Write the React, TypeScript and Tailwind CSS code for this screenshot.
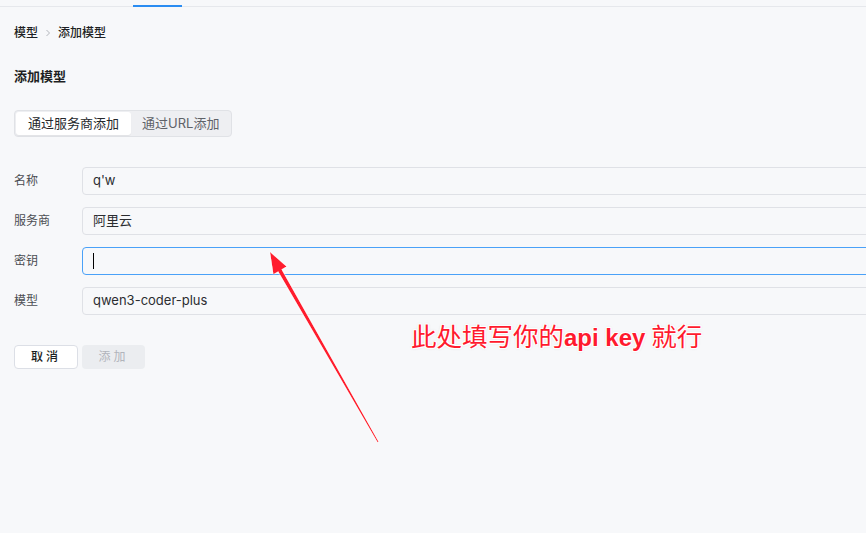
import React from "react";

const font = { fontFamily: '"Inter","Noto Sans CJK SC",sans-serif' };

function Row({ label, value, focused }: { label: string; value?: string; focused?: boolean }) {
  return (
    <div className="flex items-center h-[28px]">
      <div className="w-[68px] text-[12px] text-[#4b4d52]">{label}</div>
      <div
        className={`flex-1 h-[28px] -mr-[20px] rounded-[4px] border flex items-center pl-[10px] text-[13px] text-[#2b2d31] ${
          focused ? "border-[#4aa1f8]" : "border-[#dfe1e6]"
        }`}
      >
        {focused ? <span className="w-px h-[16px] bg-black" /> : value}
      </div>
    </div>
  );
}

export default function App() {
  return (
    <div className="relative w-[866px] h-[533px] overflow-hidden bg-[#f7f8fa]" style={font}>
      <div className="h-[7px] border-b border-[#e6e8ec] flex">
        <div className="w-[133px]" />
        <div className="w-[49px] h-[7px] border-b-2 border-[#2a8cf2] -mb-px" />
      </div>
      <div className="pl-[14px] pr-0">
        <div className="flex items-center h-[14px] mt-[19px] text-[12px] font-medium text-[#1d1f23]">
          <span>模型</span>
          <span className="ml-[6px] mr-[6px] text-[#b4b7bd]">
            <svg width="8" height="8" viewBox="0 0 8 8" fill="none" stroke="currentColor" strokeWidth="1">
              <path d="M2.5 1L5.5 4L2.5 7" />
            </svg>
          </span>
          <span>添加模型</span>
        </div>
        <div className="mt-[29px] h-[16px] flex items-center text-[13px] font-semibold text-[#1d1f23]">添加模型</div>
        <div className="mt-[25px] inline-flex h-[27px] rounded-[4px] border border-[#e0e2e6] bg-[#eeeff2] p-px">
          <div className="px-[12px] flex items-center rounded-[3px] bg-white text-[13px] text-[#26282c] shadow-[0_1px_1px_rgba(0,0,0,0.05)]">
            通过服务商添加
          </div>
          <div className="px-[11px] flex items-center text-[13px] text-[#5f6268]">通过URL添加</div>
        </div>
        <div className="mt-[30px] flex flex-col gap-[12px]">
          <Row label="名称" value="q'w" />
          <Row label="服务商" value="阿里云" />
          <Row label="密钥" focused />
          <Row label="模型" value="qwen3-coder-plus" />
        </div>
        <div className="mt-[30px] flex gap-[4px]">
          <button className="w-[64px] h-[24px] rounded-[4px] border border-[#dcdfe6] bg-white text-[12px] font-medium text-[#1d1f23] tracking-[3px]">
            取消
          </button>
          <button className="w-[63px] h-[24px] rounded-[4px] bg-[#ebedf0] text-[12px] text-[#b1b4bb] tracking-[3px]">
            添加
          </button>
        </div>
      </div>

      <div
        className="absolute left-[411px] top-[319px] text-[25.5px] leading-[32px] text-[#ff1a2e] whitespace-nowrap"
        style={{
          textShadow:
            "1px 0 1px #fff,-1px 0 1px #fff,0 1px 1px #fff,0 -1px 1px #fff,1px 1px 1px #fff,-1px -1px 1px #fff,1px -1px 1px #fff,-1px 1px 1px #fff,0 0 3px rgba(0,0,0,0.25)",
          fontFamily: '"Noto Sans CJK SC","Liberation Sans",sans-serif',
        }}
      >
        此处填写你的
        <span className="font-bold text-[24px]" style={{ fontFamily: '"Liberation Sans",sans-serif' }}>
          api key
        </span>{" "}
        就行
      </div>

      <svg className="absolute left-0 top-0" width="866" height="533" viewBox="0 0 866 533">
        <defs>
          <filter id="sh" x="-20%" y="-20%" width="140%" height="140%">
            <feDropShadow dx="0" dy="0" stdDeviation="0.8" floodColor="#ffffff" floodOpacity="1" />
          </filter>
        </defs>
        <g filter="url(#sh)" fill="#ff1a2e">
          <polygon points="270,252 286.5,266.5 281.6,269.4 378.5,441.8 377.6,442.2 278.2,271.4 273.4,274.2" />
        </g>
      </svg>
    </div>
  );
}
